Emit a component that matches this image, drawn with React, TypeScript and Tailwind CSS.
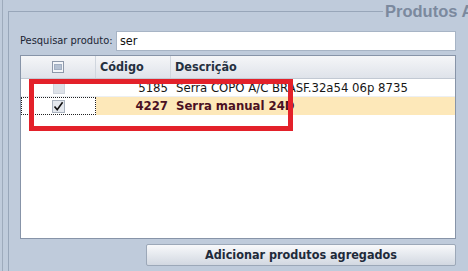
import React from 'react';

const rows = [
  { id: 1, code: '5185', desc: 'Serra COPO A/C BRASF.32a54 06p 8735', checked: false, selected: false },
  { id: 2, code: '4227', desc: 'Serra manual 24D', checked: true, selected: true },
];

function HeaderCheck() {
  return (
    <div className="w-[12px] h-[12px] border border-[#8e99aa] bg-[#f4f6f9] flex items-center justify-center">
      <div className="w-[8px] h-[6px] bg-[#b5c1d2] border border-[#a2afc2]" />
    </div>
  );
}

function RowCheck({ checked }: { checked: boolean }) {
  if (!checked) {
    return <div className="w-[12px] h-[12px] border border-[#cdd3dc] bg-[#dce1e8]" />;
  }
  return (
    <div className="w-[13px] h-[13px] border border-[#a9b2be] bg-[#e4e8ee] flex items-center justify-center">
      <svg width="11" height="11" viewBox="0 0 11 11">
        <path d="M1.5 5.5 L4.2 8.6 L9.6 1.2" fill="none" stroke="#111" strokeWidth="1.6" />
      </svg>
    </div>
  );
}

export default function App() {
  return (
    <div className="relative w-[468px] h-[271px] overflow-hidden bg-[#bfcbdb] font-['DejaVu_Sans_Condensed','DejaVu_Sans',sans-serif] [font-stretch:condensed]">
      <div className="h-full ml-[2px] border-l border-[#9eabbc] pl-[5px] pt-[1px]">
        <fieldset className="w-[560px] h-[300px] border border-[#98a6b9] pl-[11px]">
          <legend className="ml-[363px] px-[2px] text-[16.5px] leading-[20px] font-bold text-[#7b899e] font-['Liberation_Sans',sans-serif]">
            Produtos Agregados
          </legend>

          <div className="w-[436px] mt-[10px]">
            {/* Search */}
            <div className="flex items-center h-[20px]">
              <span className="w-[96px] shrink-0 whitespace-nowrap text-[11px] text-[#1b2533]">Pesquisar produto:</span>
              <div className="flex-1 h-[20px] border border-[#a7b4c5] bg-white pl-[3px] text-[12.5px] leading-[18px] text-[#111]">
                ser
              </div>
            </div>

            {/* Grid */}
            <div className="mt-[4px] h-[184px] border border-[#8794a8] bg-white">
              <div className="flex h-[23px] border-b border-[#c2c9d3] bg-gradient-to-b from-[#f5f6f8] to-[#dfe3ea] text-[12.5px] font-bold text-[#24303f]">
                <div className="w-[75px] flex items-center justify-center border-r border-[#d0d6de]">
                  <HeaderCheck />
                </div>
                <div className="w-[75px] flex items-center pl-[4px] border-r border-[#d0d6de]">Código</div>
                <div className="flex-1 flex items-center pl-[4px]">Descrição</div>
              </div>

              {rows.map((r) => (
                <div
                  key={r.id}
                  className={
                    r.selected
                      ? 'flex h-[18px] text-[13px] font-bold text-[#4b1022]'
                      : 'flex h-[18px] text-[13px] text-[#161616] border-b border-[#eceff3]'
                  }
                >
                  <div
                    className={
                      r.selected
                        ? 'w-[75px] flex items-center justify-center border border-dotted border-[#222] bg-white'
                        : 'w-[75px] flex items-center justify-center'
                    }
                  >
                    <RowCheck checked={r.checked} />
                  </div>
                  <div className={r.selected ? 'w-[75px] flex items-center justify-end pr-[3px] bg-[#fde8b9]' : 'w-[75px] flex items-center justify-end pr-[3px]'}>
                    {r.code}
                  </div>
                  <div className={r.selected ? 'flex-1 flex items-center pl-[5px] bg-[#fde8b9]' : 'flex-1 flex items-center pl-[5px]'}>
                    {r.desc}
                  </div>
                </div>
              ))}
            </div>

            {/* Button */}
            <div className="flex justify-end mt-[5px]">
              <button className="w-[310px] h-[22px] rounded-[2px] border border-[#9ca8b8] bg-gradient-to-b from-[#f8f9fb] to-[#d2d8e1] text-[12.5px] font-bold text-[#1e2a3a]">
                Adicionar produtos agregados
              </button>
            </div>
          </div>
        </fieldset>
      </div>

      {/* red annotation box */}
      <div className="absolute left-[29px] top-[79px] w-[264px] h-[52px] border-[5px] border-[#e3212a]" />
    </div>
  );
}
